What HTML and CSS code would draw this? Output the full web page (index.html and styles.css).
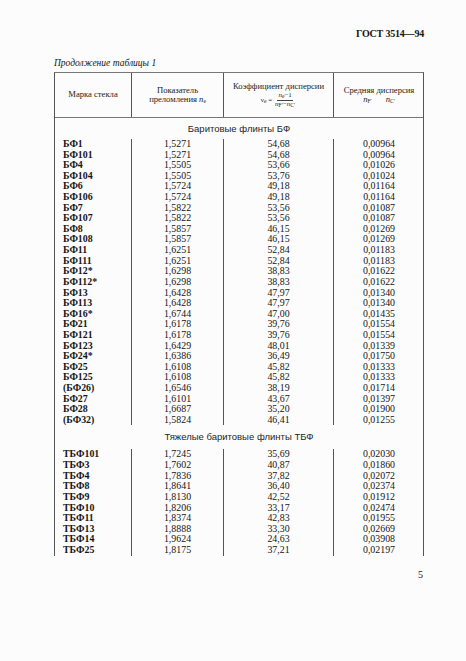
FILE: index.html
```html
<!DOCTYPE html>
<html lang="ru">
<head>
<meta charset="utf-8">
<title>ГОСТ 3514—94</title>
<link rel="stylesheet" href="styles.css">
</head>
<body>
<div class="page">
  <div class="doc-code">ГОСТ 3514—94</div>
  <div class="caption">Продолжение таблицы 1</div>

  <div class="table">
    <div class="head">
      <div class="hcell">Марка стекла</div>
      <div class="hcell">
        <span>Показатель</span>
        <span>преломления <i>n</i><sub>e</sub></span>
      </div>
      <div class="hcell">
        <span>Коэффициент дисперсии</span>
        <span class="formula">
          <span class="nu">ν<sub>e</sub> =</span>
          <span class="frac">
            <span class="num"><i>n</i><sub>e</sub>−1</span>
            <span class="den"><i>n</i><sub>F′</sub>−<i>n</i><sub>C′</sub></span>
          </span>
        </span>
      </div>
      <div class="hcell">
        <span>Средняя дисперсия</span>
        <span class="nfc"><span><i>n</i><sub>F′</sub></span><span><i>n</i><sub>C′</sub></span></span>
      </div>
    </div>

    <div class="section">Баритовые флинты БФ</div>
    <div class="body">
      <div class="row"><span>БФ1</span><span>1,5271</span><span>54,68</span><span>0,00964</span></div>
      <div class="row"><span>БФ101</span><span>1,5271</span><span>54,68</span><span>0,00964</span></div>
      <div class="row"><span>БФ4</span><span>1,5505</span><span>53,66</span><span>0,01026</span></div>
      <div class="row"><span>БФ104</span><span>1,5505</span><span>53,76</span><span>0,01024</span></div>
      <div class="row"><span>БФ6</span><span>1,5724</span><span>49,18</span><span>0,01164</span></div>
      <div class="row"><span>БФ106</span><span>1,5724</span><span>49,18</span><span>0,01164</span></div>
      <div class="row"><span>БФ7</span><span>1,5822</span><span>53,56</span><span>0,01087</span></div>
      <div class="row"><span>БФ107</span><span>1,5822</span><span>53,56</span><span>0,01087</span></div>
      <div class="row"><span>БФ8</span><span>1,5857</span><span>46,15</span><span>0,01269</span></div>
      <div class="row"><span>БФ108</span><span>1,5857</span><span>46,15</span><span>0,01269</span></div>
      <div class="row"><span>БФ11</span><span>1,6251</span><span>52,84</span><span>0,01183</span></div>
      <div class="row"><span>БФ111</span><span>1,6251</span><span>52,84</span><span>0,01183</span></div>
      <div class="row"><span>БФ12*</span><span>1,6298</span><span>38,83</span><span>0,01622</span></div>
      <div class="row"><span>БФ112*</span><span>1,6298</span><span>38,83</span><span>0,01622</span></div>
      <div class="row"><span>БФ13</span><span>1,6428</span><span>47,97</span><span>0,01340</span></div>
      <div class="row"><span>БФ113</span><span>1,6428</span><span>47,97</span><span>0,01340</span></div>
      <div class="row"><span>БФ16*</span><span>1,6744</span><span>47,00</span><span>0,01435</span></div>
      <div class="row"><span>БФ21</span><span>1,6178</span><span>39,76</span><span>0,01554</span></div>
      <div class="row"><span>БФ121</span><span>1,6178</span><span>39,76</span><span>0,01554</span></div>
      <div class="row"><span>БФ123</span><span>1,6429</span><span>48,01</span><span>0,01339</span></div>
      <div class="row"><span>БФ24*</span><span>1,6386</span><span>36,49</span><span>0,01750</span></div>
      <div class="row"><span>БФ25</span><span>1,6108</span><span>45,82</span><span>0,01333</span></div>
      <div class="row"><span>БФ125</span><span>1,6108</span><span>45,82</span><span>0,01333</span></div>
      <div class="row"><span>(БФ26)</span><span>1,6546</span><span>38,19</span><span>0,01714</span></div>
      <div class="row"><span>БФ27</span><span>1,6101</span><span>43,67</span><span>0,01397</span></div>
      <div class="row"><span>БФ28</span><span>1,6687</span><span>35,20</span><span>0,01900</span></div>
      <div class="row"><span>(БФ32)</span><span>1,5824</span><span>46,41</span><span>0,01255</span></div>
    </div>

    <div class="section section-2">Тяжелые баритовые флинты ТБФ</div>
    <div class="body">
      <div class="row"><span>ТБФ101</span><span>1,7245</span><span>35,69</span><span>0,02030</span></div>
      <div class="row"><span>ТБФ3</span><span>1,7602</span><span>40,87</span><span>0,01860</span></div>
      <div class="row"><span>ТБФ4</span><span>1,7836</span><span>37,82</span><span>0,02072</span></div>
      <div class="row"><span>ТБФ8</span><span>1,8641</span><span>36,40</span><span>0,02374</span></div>
      <div class="row"><span>ТБФ9</span><span>1,8130</span><span>42,52</span><span>0,01912</span></div>
      <div class="row"><span>ТБФ10</span><span>1,8206</span><span>33,17</span><span>0,02474</span></div>
      <div class="row"><span>ТБФ11</span><span>1,8374</span><span>42,83</span><span>0,01955</span></div>
      <div class="row"><span>ТБФ13</span><span>1,8888</span><span>33,30</span><span>0,02669</span></div>
      <div class="row"><span>ТБФ14</span><span>1,9624</span><span>24,63</span><span>0,03908</span></div>
      <div class="row"><span>ТБФ25</span><span>1,8175</span><span>37,21</span><span>0,02197</span></div>
    </div>
  </div>

  <div class="page-num">5</div>
</div>
</body>
</html>
```

FILE: styles.css
```css
html, body {
  margin: 0;
  padding: 0;
  background: #fcfcfc;
}

body {
  font-family: "Liberation Serif", "Times New Roman", serif;
  color: #151515;
}

.page {
  width: 466px;
  box-sizing: border-box;
  padding: 28px 42px 0 54px;
}

.doc-code {
  text-align: right;
  font-weight: bold;
  font-size: 10px;
  line-height: 12px;
  letter-spacing: -0.2px;
}

.caption {
  margin-top: 17px;
  font-style: italic;
  font-size: 9.5px;
  line-height: 12px;
  margin-bottom: 3px;
}

.table {
  width: 370px;
  box-sizing: border-box;
  border-left: 1px solid #555;
  border-right: 1px solid #555;
  border-top: 1px solid #777;
}

.head {
  display: grid;
  grid-template-columns: 77px 92px 110px 90px;
  height: 44px;
  border-bottom: 1px solid #777;
}

.hcell {
  display: flex;
  flex-direction: column;
  align-items: center;
  justify-content: center;
  text-align: center;
  font-size: 8.6px;
  line-height: 9.5px;
  color: #222;
  border-right: 1px solid #555;
}

.hcell:last-child {
  border-right: none;
}

.hcell sub {
  font-size: 5.5px;
  vertical-align: -1px;
  line-height: 0;
}

.formula {
  display: flex;
  align-items: center;
  gap: 2px;
  font-size: 7px;
  line-height: 7.5px;
  margin-top: 1px;
}

.frac {
  display: inline-flex;
  flex-direction: column;
  align-items: center;
}

.frac .num {
  padding: 0 1px;
  border-bottom: 0.8px solid #444;
}

.frac .den {
  padding: 0 1px;
}

.nfc {
  display: flex;
  gap: 14px;
}

.section {
  height: 21px;
  line-height: 21px;
  text-align: center;
  font-family: "Liberation Sans", Arial, sans-serif;
  font-size: 9.5px;
  color: #1e1e1e;
}

.section-2 {
  height: 24px;
  line-height: 24px;
}

.row {
  display: grid;
  grid-template-columns: 77px 92px 110px 90px;
  height: 10.62px;
  line-height: 10.62px;
  font-size: 9.9px;
}

.row span {
  border-right: 1px solid #555;
  text-align: center;
  white-space: nowrap;
}

.row span:first-child {
  text-align: left;
  padding-left: 8px;
  font-weight: bold;
}

.row span:last-child {
  border-right: none;
}

.page-num {
  text-align: right;
  margin-top: 13px;
  margin-right: 1px;
  font-size: 10px;
  line-height: 12px;
}
```
